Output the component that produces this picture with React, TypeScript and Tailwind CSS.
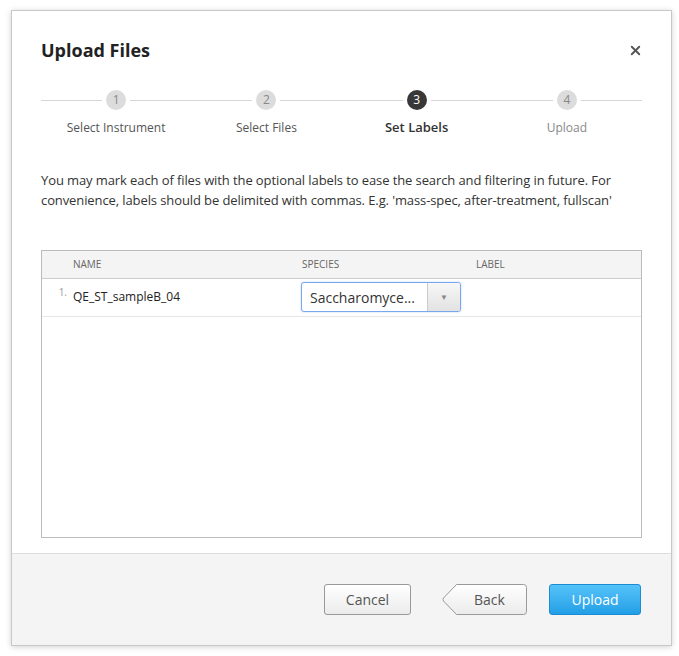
import { X } from 'lucide-react';

const steps = [
  { n: 1, label: 'Select Instrument', state: 'done' },
  { n: 2, label: 'Select Files', state: 'done' },
  { n: 3, label: 'Set Labels', state: 'active' },
  { n: 4, label: 'Upload', state: 'todo' },
];

function Stepper() {
  return (
    <div className="relative mt-[26px] grid grid-cols-4">
      <div className="absolute left-0 right-0 top-[10px] h-px bg-[#d6d6d6]" />
      {steps.map(s => (
        <div key={s.n} className="relative flex flex-col items-center">
          <div className="rounded-full bg-white p-[4px] -mt-[4px]">
            <div
              className={
                s.state === 'active'
                  ? 'flex h-[20px] w-[20px] items-center justify-center rounded-full bg-[#383838] text-[12px] text-white'
                  : 'flex h-[20px] w-[20px] items-center justify-center rounded-full bg-[#dcdcdc] text-[12px] text-[#888]'
              }
            >
              {s.n}
            </div>
          </div>
          <div
            className={
              s.state === 'active'
                ? 'mt-[4px] text-[13px] font-semibold text-[#333]'
                : s.state === 'todo'
                ? 'mt-[5px] text-[12px] text-[#888]'
                : 'mt-[5px] text-[12px] text-[#555]'
            }
          >
            {s.label}
          </div>
        </div>
      ))}
    </div>
  );
}

function SpeciesSelect() {
  return (
    <div className="flex h-[30px] w-[160px] overflow-hidden rounded-[3px] border border-[#78a8ee] bg-white shadow-[0_0_2px_rgba(80,140,230,0.4)]">
      <div className="flex flex-1 items-center truncate pl-[8px] text-[14px] text-[#333]">Saccharomyce...</div>
      <div className="flex w-[33px] items-center justify-center border-l border-[#ccc] bg-gradient-to-b from-[#f7f7f7] to-[#e2e2e2]">
        <span className="text-[8px] text-[#888]">▼</span>
      </div>
    </div>
  );
}

export default function App() {
  return (
    <div className="h-[656px] w-[679px] bg-white pl-[11px] pt-[10px] font-['Open_Sans',sans-serif]">
      <div className="flex h-[636px] w-[661px] flex-col border border-[#c8c8c8] bg-white shadow-[0_1px_6px_rgba(0,0,0,0.18)]">
        <div className="flex-1 px-[29px] pt-[26px]">
          <div className="flex items-center justify-between">
            <h1 className="text-[18px] font-bold text-[#222]">Upload Files</h1>
            <X className="mr-[-1px] h-[15px] w-[15px] text-[#555]" strokeWidth={3} />
          </div>

          <Stepper />

          <p className="mt-[32px] text-[13px] leading-[20px] tracking-[-0.1px] text-[#333]">
            You may mark each of files with the optional labels to ease the search and filtering in future. For
            convenience, labels should be delimited with commas. E.g. 'mass-spec, after-treatment, fullscan'
          </p>

          <div className="mt-[40px] h-[288px] border border-[#bbb]">
            <div className="flex h-[28px] items-center border-b border-[#ccc] bg-[#f4f4f4] text-[10px] uppercase text-[#666]">
              <div className="w-[260px] pl-[31px]">Name</div>
              <div className="w-[174px]">Species</div>
              <div>Label</div>
            </div>
            <div className="flex h-[38px] items-center border-b border-[#e6e6e6]">
              <div className="flex w-[259px] items-center">
                <span className="-mt-[3px] w-[31px] self-start pr-[6px] text-right text-[10px] leading-[15px] text-[#999]">1.</span>
                <span className="text-[12px] text-[#222]">QE_ST_sampleB_04</span>
              </div>
              <SpeciesSelect />
            </div>
          </div>
        </div>

        <div className="flex h-[92px] items-start justify-end gap-[31px] border-t border-[#ddd] bg-[#f4f4f4] pl-[29px] pr-[30px] pt-[30px]">
          <button className="h-[31px] w-[87px] rounded-[3px] border border-[#999] bg-gradient-to-b from-white to-[#ebebeb] text-[14px] text-[#555]">
            Cancel
          </button>
          <div className="relative h-[31px] w-[85px]">
            <svg className="absolute inset-0" width="85" height="31" viewBox="0 0 85 31">
              <defs>
                <linearGradient id="bg" x1="0" y1="0" x2="0" y2="1">
                  <stop offset="0" stopColor="#ffffff" />
                  <stop offset="1" stopColor="#ebebeb" />
                </linearGradient>
              </defs>
              <path
                d="M14.5 0.5 H81.5 Q84.5 0.5 84.5 3.5 V27.5 Q84.5 30.5 81.5 30.5 H14.5 L1.5 17 Q0.5 15.5 1.5 14 Z"
                fill="url(#bg)"
                stroke="#999"
              />
            </svg>
            <span className="relative flex h-full items-center justify-center pl-[10px] text-[14px] text-[#555]">Back</span>
          </div>
          <button className="-ml-[9px] h-[31px] w-[92px] rounded-[3px] border border-[#1b8bd4] bg-gradient-to-b from-[#55c3fa] to-[#219fe6] text-[14px] text-white">
            Upload
          </button>
        </div>
      </div>
    </div>
  );
}
